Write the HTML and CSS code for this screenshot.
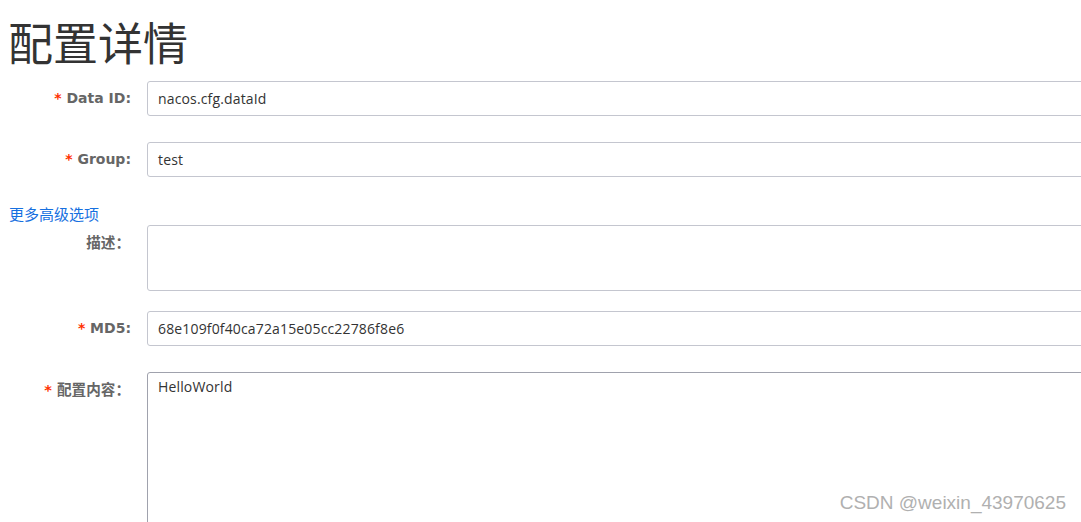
FILE: index.html
```html
<!DOCTYPE html>
<html lang="zh-CN">
<head>
<meta charset="utf-8">
<title>配置详情</title>
<link rel="stylesheet" href="styles.css">
</head>
<body>
<div class="page">
  <h1 class="title">配置详情</h1>
  <form class="form">
    <div class="item item-first">
      <label class="label"><span class="req">*</span> Data ID:</label>
      <div class="control"><div class="input">nacos.cfg.dataId</div></div>
    </div>
    <div class="item">
      <label class="label"><span class="req">*</span> Group:</label>
      <div class="control"><div class="input">test</div></div>
    </div>
    <a class="more" href="#">更多高级选项</a>
    <div class="item item-desc">
      <label class="label label-cjk">描述：</label>
      <div class="control"><div class="textarea desc"></div></div>
    </div>
    <div class="item item-md5">
      <label class="label"><span class="req">*</span> MD5:</label>
      <div class="control"><div class="input">68e109f0f40ca72a15e05cc22786f8e6</div></div>
    </div>
    <div class="item">
      <label class="label label-cjk"><span class="req">*</span> 配置内容：</label>
      <div class="control"><div class="textarea content">HelloWorld</div></div>
    </div>
  </form>
</div>
<div class="watermark">CSDN @weixin_43970625</div>
</body>
</html>
```
FILE: styles.css
```css
html, body {
  margin: 0;
  padding: 0;
  background: #fff;
  overflow: hidden;
  height: 522px;
}
.page {
  padding: 0 8px;
  font-family: "Open Sans", "Noto Sans CJK SC", sans-serif;
  color: #333;
}
.title {
  margin: 10px 0 0 0;
  font-family: "Noto Sans CJK SC", sans-serif;
  font-size: 45px;
  font-weight: 400;
  line-height: 64px;
  color: #333;
  height: 71px;
}
.form {
  width: 1200px;
}
.item {
  display: flex;
  align-items: flex-start;
  margin-bottom: 27px;
}
.item-first {
  margin-bottom: 26px;
}
.item-desc {
  margin-bottom: 20px;
}
.item-md5 {
  margin-bottom: 26px;
}
.label {
  width: 139px;
  box-sizing: border-box;
  padding-right: 16px;
  text-align: right;
  font-family: "DejaVu Sans", "Noto Sans CJK SC", sans-serif;
  font-size: 14px;
  font-weight: 700;
  color: #666;
  line-height: 35px;
  white-space: nowrap;
}
.label-cjk {
  padding-right: 17px;
  font-size: 14.6px;
}
.req {
  color: #ff3000;
}
.control {
  width: 960px;
}
.input, .textarea {
  box-sizing: border-box;
  border: 1px solid #c4c6cf;
  border-radius: 3px;
  padding: 0 10px;
  font-size: 14px;
  color: #333;
  letter-spacing: 0.15px;
  font-family: "Open Sans", "Noto Sans CJK SC", sans-serif;
}
.input {
  height: 35px;
  line-height: 33px;
}
.textarea {
  padding-top: 3px;
  line-height: 22px;
}
.desc {
  height: 66px;
}
.content {
  height: 200px;
  border-color: #a0a2ad;
}
.more {
  display: block;
  font-family: "Noto Sans CJK SC", sans-serif;
  font-size: 15px;
  line-height: 20px;
  color: #1670e0;
  text-decoration: none;
  margin: 0 0 1px 1px;
}
.watermark {
  position: absolute;
  right: 15px;
  bottom: 8px;
  font-family: "Liberation Sans", sans-serif;
  font-size: 19px;
  color: #b0b0b0;
  text-shadow: 0 0 1px #fff;
}
```
